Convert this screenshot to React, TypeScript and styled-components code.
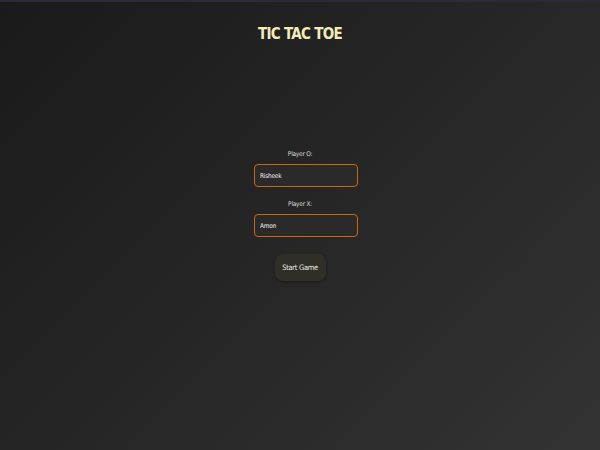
import React, { useState } from "react";
import styled, { createGlobalStyle } from "styled-components";

const GlobalStyle = createGlobalStyle`
  html, body { margin: 0; padding: 0; height: 100%; }
  body {
    font-family: "Liberation Sans Narrow", "DejaVu Sans Condensed", "Liberation Sans", sans-serif;
    background: linear-gradient(135deg, #1a1a1a 0%, #262626 50%, #333333 100%);
    min-height: 450px;
  }
  #root { min-height: 450px; }
`;

const Page = styled.div`
  min-height: 450px;
  box-sizing: border-box;
  border-top: 2px solid #2b2a3c;
  display: flex;
  flex-direction: column;
  align-items: center;
`;

const Title = styled.h1`
  margin: 21px 0 0;
  font-family: "DejaVu Sans Condensed", "Liberation Sans Narrow", sans-serif;
  font-stretch: condensed;
  font-weight: 700;
  font-size: 15px;
  letter-spacing: -0.7px;
  line-height: 22px;
  color: #f3ecb8;
`;

const Form = styled.div`
  margin-top: 105px;
  display: flex;
  flex-direction: column;
  align-items: center;
`;

const Field = styled.div`
  display: flex;
  flex-direction: column;
  align-items: center;
  margin-bottom: 13px;
`;

const Label = styled.label`
  font-size: 6.5px;
  letter-spacing: -0.25px;
  line-height: 9px;
  color: #dcdcdc;
  margin-bottom: 5px;
`;

const Input = styled.input`
  width: 104px;
  height: 23px;
  margin-left: 12px;
  box-sizing: border-box;
  border: 1.5px solid #c9690c;
  border-radius: 4px;
  background: #2a2a2a;
  color: #f2f2f2;
  font-family: inherit;
  font-size: 6.5px;
  letter-spacing: -0.25px;
  padding: 0 5px;
  outline: none;
`;

const Button = styled.button`
  margin-top: 4px;
  width: 51px;
  height: 27px;
  border: none;
  border-radius: 8px;
  background: #2f2f27;
  color: #ececec;
  font-family: inherit;
  font-size: 7.5px;
  letter-spacing: -0.3px;
  white-space: nowrap;
  padding: 0;
  box-shadow: 0 1px 3px rgba(0, 0, 0, 0.35);
  cursor: pointer;
`;

export default function App() {
  const [o, setO] = useState("Risheek");
  const [x, setX] = useState("Amon");
  return (
    <>
      <GlobalStyle />
      <Page>
        <Title>TIC TAC TOE</Title>
        <Form>
          <Field>
            <Label>Player O:</Label>
            <Input value={o} onChange={(e) => setO(e.target.value)} />
          </Field>
          <Field>
            <Label>Player X:</Label>
            <Input value={x} onChange={(e) => setX(e.target.value)} />
          </Field>
          <Button>Start Game</Button>
        </Form>
      </Page>
    </>
  );
}
